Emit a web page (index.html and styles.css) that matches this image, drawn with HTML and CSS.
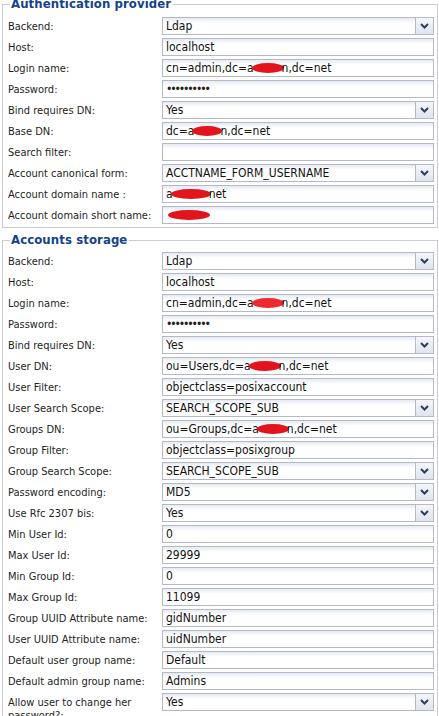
FILE: index.html
```html
<!DOCTYPE html>
<html>
<head>
<meta charset="utf-8">
<link rel="stylesheet" href="styles.css">
</head>
<body>
<fieldset class="panel panel-first">
  <legend class="legend">Authentication provider</legend>
  <div class="row"><span class="lbl">Backend:</span><div class="field combo"><span class="val">Ldap</span><span class="trigger"><svg width="9" height="6" viewBox="0 0 9 6"><polyline points="1,1 4.5,4.5 8,1" fill="none" stroke="#2c3f5b" stroke-width="2"/></svg></span></div></div>
  <div class="row"><span class="lbl">Host:</span><div class="field"><span class="val">localhost</span></div></div>
  <div class="row"><span class="lbl">Login name:</span><div class="field"><span class="val">cn=admin,dc=a<span class="blot b-w32"></span>n,dc=net</span></div></div>
  <div class="row"><span class="lbl">Password:</span><div class="field"><span class="val dots">••••••••••</span></div></div>
  <div class="row"><span class="lbl">Bind requires DN:</span><div class="field combo"><span class="val">Yes</span><span class="trigger"><svg width="9" height="6" viewBox="0 0 9 6"><polyline points="1,1 4.5,4.5 8,1" fill="none" stroke="#2c3f5b" stroke-width="2"/></svg></span></div></div>
  <div class="row"><span class="lbl">Base DN:</span><div class="field"><span class="val">dc=a<span class="blot b-w30"></span>n,dc=net</span></div></div>
  <div class="row"><span class="lbl">Search filter:</span><div class="field"><span class="val"></span></div></div>
  <div class="row"><span class="lbl">Account canonical form:</span><div class="field combo"><span class="val">ACCTNAME_FORM_USERNAME</span><span class="trigger"><svg width="9" height="6" viewBox="0 0 9 6"><polyline points="1,1 4.5,4.5 8,1" fill="none" stroke="#2c3f5b" stroke-width="2"/></svg></span></div></div>
  <div class="row"><span class="lbl">Account domain name :</span><div class="field"><span class="val">a<span class="blot b-w40"></span>net</span></div></div>
  <div class="row"><span class="lbl">Account domain short name:</span><div class="field"><span class="val"><span class="blot b-w42 b-solo"></span></span></div></div>
</fieldset>

<fieldset class="panel panel-second">
  <legend class="legend">Accounts storage</legend>
  <div class="row"><span class="lbl">Backend:</span><div class="field combo"><span class="val">Ldap</span><span class="trigger"><svg width="9" height="6" viewBox="0 0 9 6"><polyline points="1,1 4.5,4.5 8,1" fill="none" stroke="#2c3f5b" stroke-width="2"/></svg></span></div></div>
  <div class="row"><span class="lbl">Host:</span><div class="field"><span class="val">localhost</span></div></div>
  <div class="row"><span class="lbl">Login name:</span><div class="field"><span class="val">cn=admin,dc=a<span class="blot b-w32 b-light"></span>n,dc=net</span></div></div>
  <div class="row"><span class="lbl">Password:</span><div class="field"><span class="val dots">••••••••••</span></div></div>
  <div class="row"><span class="lbl">Bind requires DN:</span><div class="field combo"><span class="val">Yes</span><span class="trigger"><svg width="9" height="6" viewBox="0 0 9 6"><polyline points="1,1 4.5,4.5 8,1" fill="none" stroke="#2c3f5b" stroke-width="2"/></svg></span></div></div>
  <div class="row"><span class="lbl">User DN:</span><div class="field"><span class="val">ou=Users,dc=a<span class="blot b-w32"></span>n,dc=net</span></div></div>
  <div class="row"><span class="lbl">User Filter:</span><div class="field"><span class="val">objectclass=posixaccount</span></div></div>
  <div class="row"><span class="lbl">User Search Scope:</span><div class="field combo"><span class="val">SEARCH_SCOPE_SUB</span><span class="trigger"><svg width="9" height="6" viewBox="0 0 9 6"><polyline points="1,1 4.5,4.5 8,1" fill="none" stroke="#2c3f5b" stroke-width="2"/></svg></span></div></div>
  <div class="row"><span class="lbl">Groups DN:</span><div class="field"><span class="val">ou=Groups,dc=a<span class="blot b-w32"></span>n,dc=net</span></div></div>
  <div class="row"><span class="lbl">Group Filter:</span><div class="field"><span class="val">objectclass=posixgroup</span></div></div>
  <div class="row"><span class="lbl">Group Search Scope:</span><div class="field combo"><span class="val">SEARCH_SCOPE_SUB</span><span class="trigger"><svg width="9" height="6" viewBox="0 0 9 6"><polyline points="1,1 4.5,4.5 8,1" fill="none" stroke="#2c3f5b" stroke-width="2"/></svg></span></div></div>
  <div class="row"><span class="lbl">Password encoding:</span><div class="field combo"><span class="val">MD5</span><span class="trigger"><svg width="9" height="6" viewBox="0 0 9 6"><polyline points="1,1 4.5,4.5 8,1" fill="none" stroke="#2c3f5b" stroke-width="2"/></svg></span></div></div>
  <div class="row"><span class="lbl">Use Rfc 2307 bis:</span><div class="field combo"><span class="val">Yes</span><span class="trigger"><svg width="9" height="6" viewBox="0 0 9 6"><polyline points="1,1 4.5,4.5 8,1" fill="none" stroke="#2c3f5b" stroke-width="2"/></svg></span></div></div>
  <div class="row"><span class="lbl">Min User Id:</span><div class="field"><span class="val">0</span></div></div>
  <div class="row"><span class="lbl">Max User Id:</span><div class="field"><span class="val">29999</span></div></div>
  <div class="row"><span class="lbl">Min Group Id:</span><div class="field"><span class="val">0</span></div></div>
  <div class="row"><span class="lbl">Max Group Id:</span><div class="field"><span class="val">11099</span></div></div>
  <div class="row"><span class="lbl">Group UUID Attribute name:</span><div class="field"><span class="val">gidNumber</span></div></div>
  <div class="row"><span class="lbl">User UUID Attribute name:</span><div class="field"><span class="val">uidNumber</span></div></div>
  <div class="row"><span class="lbl">Default user group name:</span><div class="field"><span class="val">Default</span></div></div>
  <div class="row"><span class="lbl">Default admin group name:</span><div class="field"><span class="val">Admins</span></div></div>
  <div class="row"><span class="lbl">Allow user to change her password?:</span><div class="field combo"><span class="val">Yes</span><span class="trigger"><svg width="9" height="6" viewBox="0 0 9 6"><polyline points="1,1 4.5,4.5 8,1" fill="none" stroke="#2c3f5b" stroke-width="2"/></svg></span></div></div>
</fieldset>
</body>
</html>
```

FILE: styles.css
```css
html, body {
  margin: 0;
  padding: 0;
  background: #ffffff;
}

body {
  font-family: "DejaVu Sans Condensed", "DejaVu Sans", sans-serif;
  color: #222;
}

.panel {
  box-sizing: border-box;
  width: 436px;
  margin: 0 0 0 2px;
  padding: 6px 3px 0 5px;
  border: 1px solid #c9cbd2;
  min-width: 0;
}

.panel-first {
  margin-top: -3px;
}

.panel-second {
  margin-top: 5px;
  padding-top: 5px;
}

.legend {
  font-family: "DejaVu Sans Condensed", "DejaVu Sans", sans-serif;
  font-weight: bold;
  font-size: 13px;
  line-height: 14px;
  color: #15428b;
  padding: 0 2px 0 1px;
  margin-left: 2px;
  letter-spacing: 0.1px;
}

.row {
  display: grid;
  grid-template-columns: 154px 1fr;
  margin-bottom: 3px;
}

.lbl {
  font-size: 11px;
  line-height: 13px;
  padding-top: 3px;
  padding-right: 8px;
  color: #1e1e1e;
}

.field {
  box-sizing: border-box;
  height: 18px;
  border: 1px solid #b5b8c8;
  background: linear-gradient(#e6eaf2, #ffffff 5px);
  display: flex;
  align-items: stretch;
  overflow: hidden;
}

.val {
  flex: 1;
  font-size: 12px;
  line-height: 16px;
  padding-left: 3px;
  color: #111;
  white-space: nowrap;
  overflow: hidden;
}

.dots {
  font-size: 12px;
  letter-spacing: -2.1px;
  color: #222;
}

.trigger {
  width: 17px;
  border-left: 1px solid #b5b8c8;
  background: linear-gradient(#f4f6fa, #dfe5ee);
  display: flex;
  align-items: center;
  justify-content: center;
}

.blot {
  display: inline-block;
  height: 10px;
  vertical-align: -1px;
  background: #e3151c;
  border-radius: 50%;
  margin: 0 -2px;
}

.b-w30 { width: 30px; }
.b-w32 { width: 32px; }
.b-w40 { width: 40px; }
.b-w42 { width: 42px; }

.b-solo {
  margin-left: 2px;
}

.b-light {
  background: #ee2a30;
}
```
